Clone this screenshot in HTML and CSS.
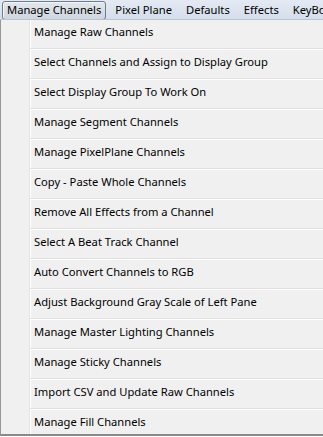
FILE: index.html
```html
<!DOCTYPE html>
<html>
<head>
  <title>Manage Channels</title>
  <link rel="stylesheet" href="styles.css">
</head>
<body>
  <div class="menubar">
    <span class="top-item open">Manage Channels</span>
    <span class="top-item">Pixel Plane</span>
    <span class="top-item">Defaults</span>
    <span class="top-item">Effects</span>
    <span class="top-item">KeyBoard</span>
  </div>
  <div class="dropdown">
    <div class="entry">Manage Raw Channels</div>
    <div class="entry">Select Channels and Assign to Display Group</div>
    <div class="entry">Select Display Group To Work On</div>
    <div class="entry">Manage Segment Channels</div>
    <div class="entry">Manage PixelPlane Channels</div>
    <div class="entry">Copy - Paste Whole Channels</div>
    <div class="entry">Remove All Effects from a Channel</div>
    <div class="entry">Select A Beat Track Channel</div>
    <div class="entry">Auto Convert Channels to RGB</div>
    <div class="entry">Adjust Background Gray Scale of Left Pane</div>
    <div class="entry">Manage Master Lighting Channels</div>
    <div class="entry">Manage Sticky Channels</div>
    <div class="entry">Import CSV and Update Raw Channels</div>
    <div class="entry">Manage Fill Channels</div>
  </div>
</body>
</html>
```

FILE: styles.css
```css
body {
  margin: 0;
  width: 323px;
  height: 437px;
  overflow: hidden;
  background-color: #ffffff;
  font-family: "Noto Sans", Arial, sans-serif;
  font-size: 11.2px;
  color: #000000;
}
.menubar {
  display: flex;
  height: 20px;
  padding-left: 2px;
  white-space: nowrap;
  overflow: hidden;
  background: linear-gradient(#e3eaf4, #d5deeb);
  border-bottom: 1px solid #b9c5d6;
  box-sizing: border-box;
}
.top-item {
  line-height: 16px;
  padding: 0 4px;
  margin: 1px 4px 0 0;
  height: 17px;
  border: 1px solid transparent;
  border-radius: 3px;
}
.top-item.open {
  background: linear-gradient(#e2e6ec, #d0d6de);
  border-color: #6f7b8a;
  box-shadow: inset 1px 1px 0 #f4f6f9;
}
.dropdown {
  width: 323px;
  height: 416px;
  box-sizing: border-box;
  background-color: #f0f0f0;
  border-left: 1px solid #979797;
  border-bottom: 2px solid #8a8a8a;
  background-image: linear-gradient(to right, transparent 28px, #e2e3e3 28px, #e2e3e3 29px, #ffffff 29px, #ffffff 30px, transparent 30px);
}
.entry {
  height: 28px;
  line-height: 24px;
  white-space: nowrap;
  border-bottom: 1px solid #e0e0e0;
  box-shadow: 0 1px 0 #ffffff;
  margin: 0 0 1px 29px;
  padding-left: 4px;
}
.entry:last-child {
  border-bottom: none;
  box-shadow: none;
}
```
